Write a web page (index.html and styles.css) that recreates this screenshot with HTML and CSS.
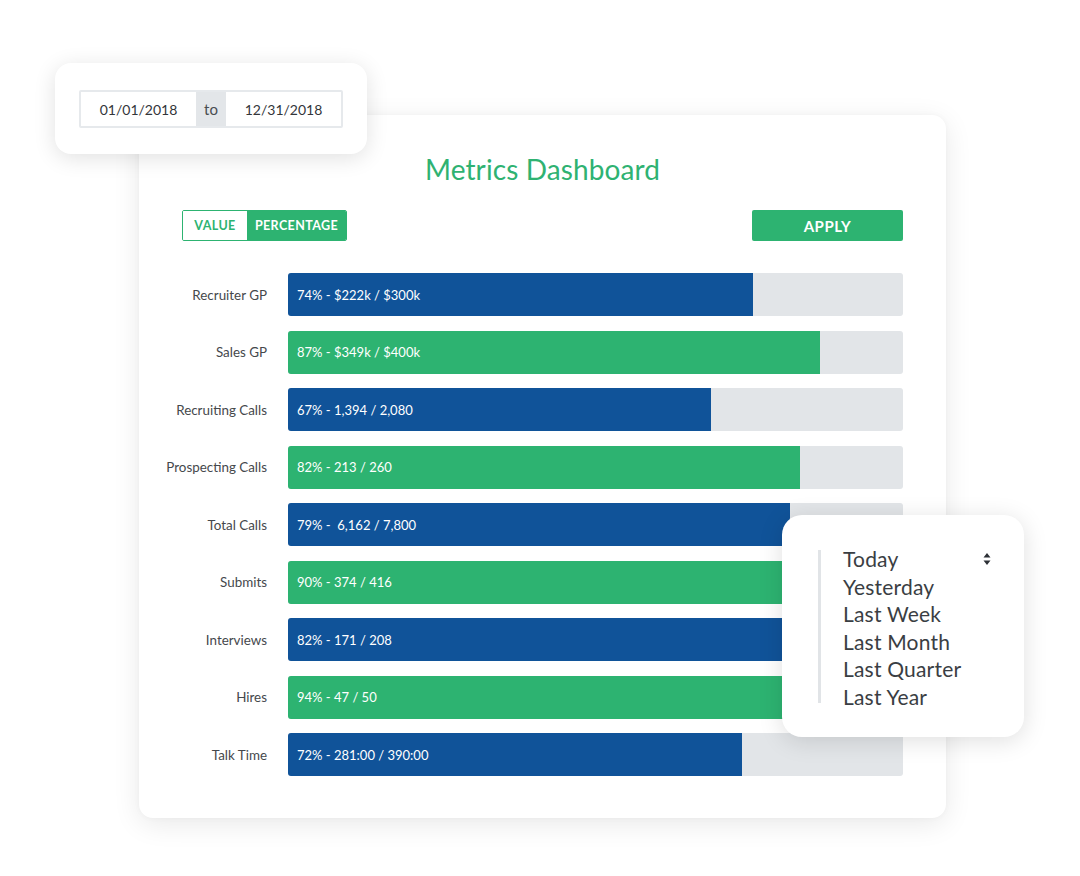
FILE: index.html
```html
<!DOCTYPE html>
<html>
<head>
<meta charset="utf-8">
<link rel="stylesheet" href="styles.css">
</head>
<body>
<div class="stage">
  <div class="card">
    <h1 class="title">Metrics Dashboard</h1>
    <div class="controls">
      <div class="toggle">
        <span class="toggle-opt">VALUE</span>
        <span class="toggle-opt active">PERCENTAGE</span>
      </div>
      <button class="apply">APPLY</button>
    </div>
    <div class="rows">
      <div class="label">Recruiter GP</div>
      <div class="track"><div class="fill blue" style="width:75.6%">74% - $222k / $300k</div></div>
      <div class="label">Sales GP</div>
      <div class="track"><div class="fill green" style="width:86.5%">87% - $349k / $400k</div></div>
      <div class="label">Recruiting Calls</div>
      <div class="track"><div class="fill blue" style="width:68.8%">67% - 1,394 / 2,080</div></div>
      <div class="label">Prospecting Calls</div>
      <div class="track"><div class="fill green" style="width:83.3%">82% - 213 / 260</div></div>
      <div class="label">Total Calls</div>
      <div class="track"><div class="fill blue" style="width:81.6%">79% -&nbsp; 6,162 / 7,800</div></div>
      <div class="label">Submits</div>
      <div class="track"><div class="fill green" style="width:90%">90% - 374 / 416</div></div>
      <div class="label">Interviews</div>
      <div class="track"><div class="fill blue" style="width:84%">82% - 171 / 208</div></div>
      <div class="label">Hires</div>
      <div class="track"><div class="fill green" style="width:94%">94% - 47 / 50</div></div>
      <div class="label">Talk Time</div>
      <div class="track"><div class="fill blue" style="width:73.8%">72% - 281:00 / 390:00</div></div>
    </div>
  </div>

  <div class="date-card">
    <div class="date-group">
      <span class="date-field">01/01/2018</span>
      <span class="date-sep">to</span>
      <span class="date-field">12/31/2018</span>
    </div>
  </div>

  <div class="range-card">
    <div class="range-bar"></div>
    <ul class="range-list">
      <li class="range-first">Today
        <svg class="sort-icon" width="8" height="14" viewBox="0 0 8 14"><path d="M4 1 L7.5 5.5 H0.5 Z M4 13 L7.5 8.5 H0.5 Z" fill="#2d3136"/></svg>
      </li>
      <li>Yesterday</li>
      <li>Last Week</li>
      <li>Last Month</li>
      <li>Last Quarter</li>
      <li>Last Year</li>
    </ul>
  </div>
</div>
</body>
</html>
```

FILE: styles.css
```css
* { box-sizing: border-box; }
html, body { margin: 0; padding: 0; background: #ffffff; }
body {
  font-family: "Lato", "Open Sans", "Liberation Sans", sans-serif;
  color: #3a3d41;
}
.stage {
  position: relative;
  width: 1080px;
  height: 876px;
  padding: 115px 0 0 139px;
  overflow: hidden;
}
.card {
  width: 807px;
  height: 703px;
  background: #fff;
  border-radius: 14px;
  box-shadow: 0 6px 28px rgba(0, 0, 0, 0.09), 0 0 6px rgba(0,0,0,0.03);
  padding: 37px 43px 42px 43px;
}
.title {
  margin: 0;
  font-weight: 400;
  font-size: 28px;
  line-height: 34px;
  height: 34px;
  text-align: center;
  color: #2fb272;
  letter-spacing: 0.1px;
}
.controls {
  margin-top: 24px;
  height: 31px;
  display: flex;
  justify-content: space-between;
  align-items: stretch;
}
.toggle {
  display: flex;
  border: 1.5px solid #2db371;
  border-radius: 2px;
  overflow: hidden;
  width: 165px;
}
.toggle-opt {
  display: flex;
  align-items: center;
  justify-content: center;
  font-size: 12.5px;
  font-weight: 700;
  letter-spacing: 0.4px;
  color: #2db371;
  width: 64px;
  background: #fff;
}
.toggle-opt.active {
  flex: 1;
  background: #2db371;
  color: #fff;
}
.apply {
  width: 151px;
  border: none;
  border-radius: 2px;
  background: #2db371;
  color: #fff;
  font-family: inherit;
  font-size: 15px;
  font-weight: 700;
  letter-spacing: 0.5px;
  padding: 0;
  cursor: pointer;
}
.rows {
  margin-top: 32px;
  display: grid;
  grid-template-columns: 85px 615px;
  column-gap: 21px;
  row-gap: 14.5px;
  grid-auto-rows: 43px;
}
.label {
  display: flex;
  align-items: center;
  justify-content: flex-end;
  white-space: nowrap;
  font-size: 13.4px;
  color: #45484c;
}
.track {
  background: #e2e5e8;
  border-radius: 3px;
  overflow: hidden;
  display: flex;
}
.fill {
  height: 100%;
  display: flex;
  align-items: center;
  padding-left: 9px;
  color: #fff;
  font-size: 13px;
  white-space: nowrap;
}
.fill.blue { background: #105399; }
.fill.green { background: #2db371; }

.date-card {
  position: absolute;
  left: 55px;
  top: 63px;
  width: 312px;
  height: 91px;
  background: #fff;
  border-radius: 16px;
  box-shadow: 0 4px 22px rgba(0, 0, 0, 0.12);
  padding: 27px 24px;
}
.date-group {
  display: flex;
  height: 38px;
  border: 2px solid #e6e9ec;
  border-radius: 2px;
}
.date-field {
  width: 115px;
  display: flex;
  align-items: center;
  justify-content: center;
  font-size: 14px;
  color: #33363a;
}
.date-sep {
  width: 30px;
  background: #e3e6e9;
  display: flex;
  align-items: center;
  justify-content: center;
  font-size: 15px;
  color: #4a4d51;
}

.range-card {
  position: absolute;
  left: 782px;
  top: 515px;
  width: 242px;
  height: 222px;
  background: #fff;
  border-radius: 20px;
  box-shadow: 0 4px 24px rgba(0, 0, 0, 0.13);
  padding: 30px 33px 0 36px;
  display: flex;
  align-items: flex-start;
}
.range-bar {
  width: 3px;
  height: 153px;
  margin-top: 5px;
  background: #e1e4e7;
  flex: none;
}
.range-list {
  list-style: none;
  margin: 0 0 0 22px;
  padding: 0;
  flex: 1;
  font-size: 21px;
  font-weight: 400;
  letter-spacing: 0.2px;
  line-height: 27.6px;
  color: #3a3e43;
}
.range-first {
  display: flex;
  justify-content: space-between;
  align-items: center;
}
```
